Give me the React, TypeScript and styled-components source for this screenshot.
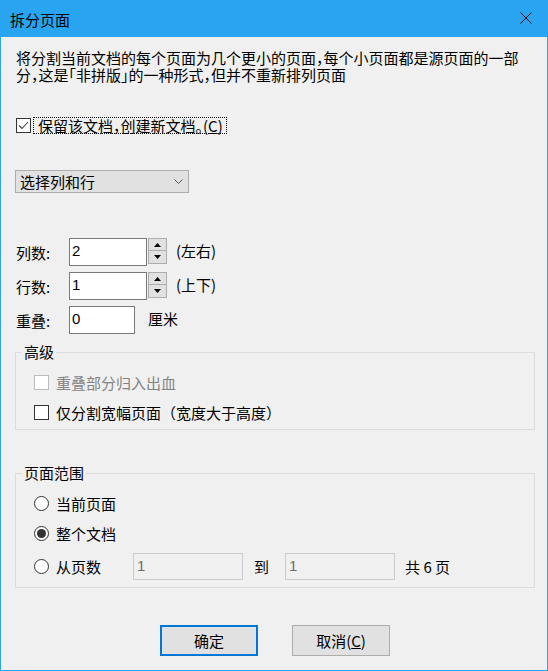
import React from "react";
import styled, { createGlobalStyle } from "styled-components";

const GlobalStyle = createGlobalStyle`
  html, body {
    margin: 0;
    padding: 0;
    background: #f0f0f0;
  }
  body {
    font-family: "Noto Sans CJK SC", "Noto Sans", sans-serif;
    font-size: 15px;
    line-height: 17px;
    color: #000;
  }
`;

function Dialog() {
  return (
    <Window>
      <TitleBar>
        <Title>拆分页面</Title>
        <CloseButton>
          <svg width="12" height="12" viewBox="0 0 12 12">
            <path d="M0.5 0.5L11.5 11.5M11.5 0.5L0.5 11.5" stroke="#000" strokeWidth="1" />
          </svg>
        </CloseButton>
      </TitleBar>
      <Body>
        <Description>
          将分割当前文档的每个页面为几个更小的页面，每个小页面都是源页面的一部分，这是「非拼版」的一种形式，但并不重新排列页面
        </Description>

        <KeepRow>
          <CheckBox $checked />
          <FocusLabel>
            保留该文档，创建新文档。(<u>C</u>)
          </FocusLabel>
        </KeepRow>

        <Select>
          <span>选择列和行</span>
          <svg width="9" height="5" viewBox="0 0 9 5">
            <path d="M0.5 0.5L4.5 4.5L8.5 0.5" stroke="#555" strokeWidth="1" fill="none" />
          </svg>
        </Select>

        <FormRows>
          <FormRow>
            <FieldLabel>列数:</FieldLabel>
            <TextBox $width={78}>2</TextBox>
            <Spinner />
            <SideText>(左右)</SideText>
          </FormRow>
          <FormRow>
            <FieldLabel>行数:</FieldLabel>
            <TextBox $width={78}>1</TextBox>
            <Spinner />
            <SideText>(上下)</SideText>
          </FormRow>
          <FormRow>
            <FieldLabel>重叠:</FieldLabel>
            <TextBox $width={66}>0</TextBox>
            <UnitText>厘米</UnitText>
          </FormRow>
        </FormRows>

        <Group $top={9}>
          <Legend>高级</Legend>
          <GroupRows>
            <OptionRow>
              <CheckBox $disabled />
              <OptionText $disabled>重叠部分归入出血</OptionText>
            </OptionRow>
            <OptionRow>
              <CheckBox />
              <OptionText>仅分割宽幅页面（宽度大于高度）</OptionText>
            </OptionRow>
          </GroupRows>
        </Group>

        <Group $top={34}>
          <Legend>页面范围</Legend>
          <GroupRows>
            <OptionRow>
              <Radio />
              <OptionText>当前页面</OptionText>
            </OptionRow>
            <OptionRow>
              <Radio $checked />
              <OptionText>整个文档</OptionText>
            </OptionRow>
            <OptionRow $tall>
              <Radio />
              <OptionText $width={77}>从页数</OptionText>
              <DisabledBox>1</DisabledBox>
              <RangeText $gap={11}>到</RangeText>
              <DisabledBox $gap={16}>1</DisabledBox>
              <RangeText $gap={10}>共 6 页</RangeText>
            </OptionRow>
          </GroupRows>
        </Group>

        <ButtonRow>
          <Button $default>确定</Button>
          <Button>
            取消(<u>C</u>)
          </Button>
        </ButtonRow>
      </Body>
    </Window>
  );
}

function Spinner() {
  return (
    <SpinStack>
      <SpinButton>
        <svg width="7" height="4" viewBox="0 0 7 4">
          <path d="M3.5 0L7 4H0Z" fill="#000" />
        </svg>
      </SpinButton>
      <SpinButton>
        <svg width="7" height="4" viewBox="0 0 7 4">
          <path d="M0 0H7L3.5 4Z" fill="#000" />
        </svg>
      </SpinButton>
    </SpinStack>
  );
}

function CheckBox({ $checked, $disabled }: { $checked?: boolean; $disabled?: boolean }) {
  return (
    <CheckBoxStyled $disabled={$disabled}>
      {$checked && (
        <svg width="13" height="13" viewBox="0 0 13 13">
          <path d="M2 6.5L5 9.5L11 3" stroke="#444" strokeWidth="1.1" fill="none" />
        </svg>
      )}
    </CheckBoxStyled>
  );
}

function Radio({ $checked }: { $checked?: boolean }) {
  return <RadioStyled>{$checked && <RadioDot />}</RadioStyled>;
}

const Window = styled.div`
  width: 548px;
  height: 671px;
  display: flex;
  flex-direction: column;
`;
const TitleBar = styled.div`
  height: 37px;
  flex: none;
  background: #29a4f1;
  display: flex;
  align-items: center;
  justify-content: space-between;
  padding: 2px 16px 0 10px;
  box-sizing: border-box;
`;
const Title = styled.div`
  font-size: 15px;
`;
const CloseButton = styled.div`
  width: 12px;
  height: 12px;
  display: flex;
  margin-top: -3px;
`;
const Body = styled.div`
  flex: 1;
  background: #f0f0f0;
  border: 1px solid #29a4f1;
  border-top: none;
  padding: 12px 0 0 15px;
  display: flex;
  flex-direction: column;
  align-items: flex-start;
`;
const Description = styled.div`
  width: 510px;
  font-feature-settings: "halt";
`;
const KeepRow = styled.div`
  display: flex;
  align-items: center;
  gap: 2px;
  margin-top: 34px;
  height: 17px;
`;
const CheckBoxStyled = styled.span<{ $disabled?: boolean }>`
  width: 15px;
  height: 15px;
  box-sizing: border-box;
  flex: none;
  border: 1px solid ${(p) => (p.$disabled ? "#bcbcbc" : "#333")};
  background: #fff;
  display: flex;
  align-items: center;
  justify-content: center;
`;
const FocusLabel = styled.span`
  border: 1px dotted #000;
  padding: 0 3px 0 4px;
  line-height: 15px;
  font-feature-settings: "halt";
`;
const Select = styled.div`
  margin: 36px 0 0 -1px;
  width: 174px;
  height: 23px;
  box-sizing: border-box;
  border: 1px solid #adadad;
  background: #e1e1e1;
  padding: 0 5px 0 4px;
  display: flex;
  align-items: center;
  justify-content: space-between;
`;
const FormRows = styled.div`
  margin-top: 45px;
  display: flex;
  flex-direction: column;
  gap: 6px;
`;
const FormRow = styled.div`
  display: flex;
  align-items: center;
  height: 28px;
`;
const FieldLabel = styled.span`
  width: 53px;
`;
const TextBox = styled.div<{ $width: number }>`
  width: ${(p) => p.$width}px;
  height: 28px;
  box-sizing: border-box;
  border: 1px solid #7a7a7a;
  background: #fff;
  padding: 3px 0 0 2px;
  font-family: "Liberation Sans", "Noto Sans", sans-serif;
  font-size: 15px;
`;
const SpinStack = styled.div`
  align-self: flex-start;
  margin-left: 1px;
  display: flex;
  flex-direction: column;
`;
const SpinButton = styled.div`
  width: 19px;
  height: 13px;
  box-sizing: border-box;
  border: 1px solid #adadad;
  background: #e1e1e1;
  display: flex;
  align-items: center;
  justify-content: center;
  & + & {
    margin-top: -1px;
    height: 14px;
  }
`;
const SideText = styled.span`
  margin-left: 9px;
  margin-top: -3px;
`;
const UnitText = styled.span`
  margin-left: 13px;
  margin-top: -3px;
`;
const Group = styled.fieldset<{ $top: number }>`
  margin: ${(p) => p.$top}px 0 0 -1px;
  width: 520px;
  box-sizing: border-box;
  border: 1px solid #dcdcdc;
  padding: 11px 0 7px 0;
  min-inline-size: 0;
`;
const Legend = styled.legend`
  margin-left: 6px;
  padding: 0 2px;
  line-height: 18px;
`;
const GroupRows = styled.div`
  display: flex;
  flex-direction: column;
  gap: 10px;
  padding-left: 18px;
`;
const OptionRow = styled.div<{ $tall?: boolean }>`
  display: flex;
  align-items: center;
  height: ${(p) => (p.$tall ? 27 : 20)}px;
`;
const OptionText = styled.span<{ $disabled?: boolean; $width?: number }>`
  margin-left: 7px;
  color: ${(p) => (p.$disabled ? "#838383" : "#000")};
  ${(p) => (p.$width ? `width: ${p.$width}px;` : "")}
`;
const RadioStyled = styled.span`
  width: 15px;
  height: 15px;
  box-sizing: border-box;
  flex: none;
  border: 1px solid #333;
  border-radius: 50%;
  background: #fff;
  display: flex;
  align-items: center;
  justify-content: center;
`;
const RadioDot = styled.span`
  width: 9px;
  height: 9px;
  border-radius: 50%;
  background: #333;
`;
const DisabledBox = styled.div<{ $gap?: number }>`
  margin-left: ${(p) => p.$gap ?? 0}px;
  width: 110px;
  height: 27px;
  box-sizing: border-box;
  border: 1px solid #cccccc;
  background: #f0f0f0;
  color: #6d6d6d;
  padding: 3px 0 0 3px;
  align-self: flex-start;
  font-family: "Liberation Sans", "Noto Sans", sans-serif;
  font-size: 15px;
`;
const RangeText = styled.span<{ $gap: number }>`
  margin-left: ${(p) => p.$gap}px;
`;
const ButtonRow = styled.div`
  margin: 37px 0 0 -15px;
  width: 546px;
  padding-left: 2px;
  box-sizing: border-box;
  display: flex;
  justify-content: center;
  gap: 34px;
`;
const Button = styled.div<{ $default?: boolean }>`
  width: 98px;
  height: 31px;
  box-sizing: border-box;
  border: ${(p) => (p.$default ? "2px solid #0078d7" : "1px solid #adadad")};
  background: #e1e1e1;
  display: flex;
  align-items: center;
  justify-content: center;
`;

export default function App() {
  return (
    <>
      <GlobalStyle />
      <Dialog />
    </>
  );
}
